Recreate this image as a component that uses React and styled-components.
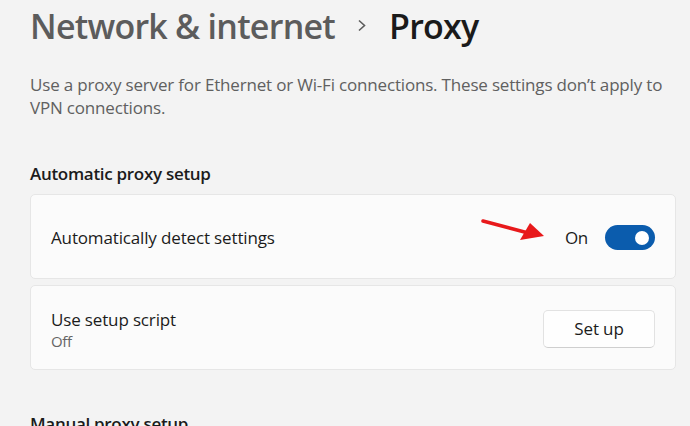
import React from "react";
import styled, { createGlobalStyle } from "styled-components";

const Global = createGlobalStyle`
  html, body { margin: 0; padding: 0; background: #f3f3f3; }
  body { font-family: "Open Sans", "Noto Sans", sans-serif; overflow: hidden; }
  * { box-sizing: border-box; }
`;

const Page = styled.div`
  width: 690px;
  height: 426px;
  padding: 3px 14px 0 30px;
  background: #f3f3f3;
  overflow: hidden;
`;

const Header = styled.h1`
  display: flex;
  align-items: baseline;
  margin: 0;
  font-size: 34px;
  line-height: 46px;
  font-weight: 600;
  letter-spacing: -0.75px;
`;

const Crumb = styled.span`
  color: ${(p) => (p.$current ? "#1a1a1a" : "#5c5c5c")};
`;

const Chevron = styled.svg`
  width: 10px;
  height: 13px;
  margin: 0 22px 0 22px;
  align-self: center;
  margin-top: -2px;
`;

const Description = styled.p`
  margin: 24px 0 0;
  font-size: 17px;
  line-height: 23px;
  color: #606060;
  letter-spacing: -0.18px;
`;

const SectionTitle = styled.h2`
  margin: ${(p) => p.$top}px 0 0;
  font-size: 17px;
  line-height: 23px;
  font-weight: 600;
  color: #1b1b1b;
  letter-spacing: -0.3px;
`;

const Cards = styled.div`
  display: flex;
  flex-direction: column;
  gap: 6px;
  margin-top: 9px;
`;

const Card = styled.div`
  height: 85px;
  display: flex;
  align-items: center;
  justify-content: space-between;
  padding: 0 20px 0 20px;
  background: #fbfbfb;
  border: 1px solid #e6e6e6;
  border-radius: 5px;
`;

const Label = styled.div`
  display: flex;
  flex-direction: column;
  padding-top: 4px;
`;

const Primary = styled.span`
  font-size: 17px;
  line-height: 22px;
  color: #1b1b1b;
  letter-spacing: -0.15px;
  padding-top: ${(p) => (p.$nudge ? 3 : 0)}px;
`;

const Secondary = styled.span`
  font-size: 15px;
  line-height: 20px;
  color: #656565;
  letter-spacing: -0.3px;
`;

const Control = styled.div`
  position: relative;
  display: flex;
  align-items: center;
  gap: 17px;
  padding-top: 2px;
`;

const State = styled.span`
  font-size: 17px;
  color: #1b1b1b;
  letter-spacing: -0.3px;
`;

const Toggle = styled.div`
  width: 50px;
  height: 25px;
  border-radius: 13px;
  background: #0b5cad;
  display: flex;
  align-items: center;
  justify-content: flex-end;
  padding-right: 6px;
`;

const Knob = styled.div`
  width: 14px;
  height: 14px;
  border-radius: 50%;
  background: #ffffff;
`;

const Arrow = styled.svg`
  position: absolute;
  left: -83px;
  top: -3px;
  width: 66px;
  height: 24px;
  overflow: visible;
`;

const Button = styled.button`
  width: 112px;
  height: 38px;
  background: #fefefe;
  border: 1px solid #e2e2e2;
  border-bottom-color: #cfcfcf;
  border-radius: 5px;
  font-family: inherit;
  font-size: 17px;
  color: #1b1b1b;
  letter-spacing: -0.15px;
  padding: 0;
  margin-top: 2px;
`;

export default function App() {
  return (
    <>
      <Global />
      <Page>
        <Header>
          <Crumb>Network &amp; internet</Crumb>
          <Chevron viewBox="0 0 10 13">
            <path d="M2 1.5 L7.5 6.5 L2 11.5" fill="none" stroke="#5c5c5c" strokeWidth="1.6" />
          </Chevron>
          <Crumb $current>Proxy</Crumb>
        </Header>
        <Description>
          Use a proxy server for Ethernet or Wi-Fi connections. These settings don’t apply to VPN connections.
        </Description>
        <SectionTitle $top={43}>Automatic proxy setup</SectionTitle>
        <Cards>
          <Card>
            <Primary $nudge>Automatically detect settings</Primary>
            <Control>
              <Arrow viewBox="0 0 66 24">
                <path d="M1 1 L50 14" stroke="#e8191b" strokeWidth="3.5" strokeLinecap="round" />
                <polygon points="62,16 38,20 48,3" fill="#e8191b" />
              </Arrow>
              <State>On</State>
              <Toggle>
                <Knob />
              </Toggle>
            </Control>
          </Card>
          <Card>
            <Label>
              <Primary>Use setup script</Primary>
              <Secondary>Off</Secondary>
            </Label>
            <Button>Set up</Button>
          </Card>
        </Cards>
        <SectionTitle $top={42}>Manual proxy setup</SectionTitle>
      </Page>
    </>
  );
}
